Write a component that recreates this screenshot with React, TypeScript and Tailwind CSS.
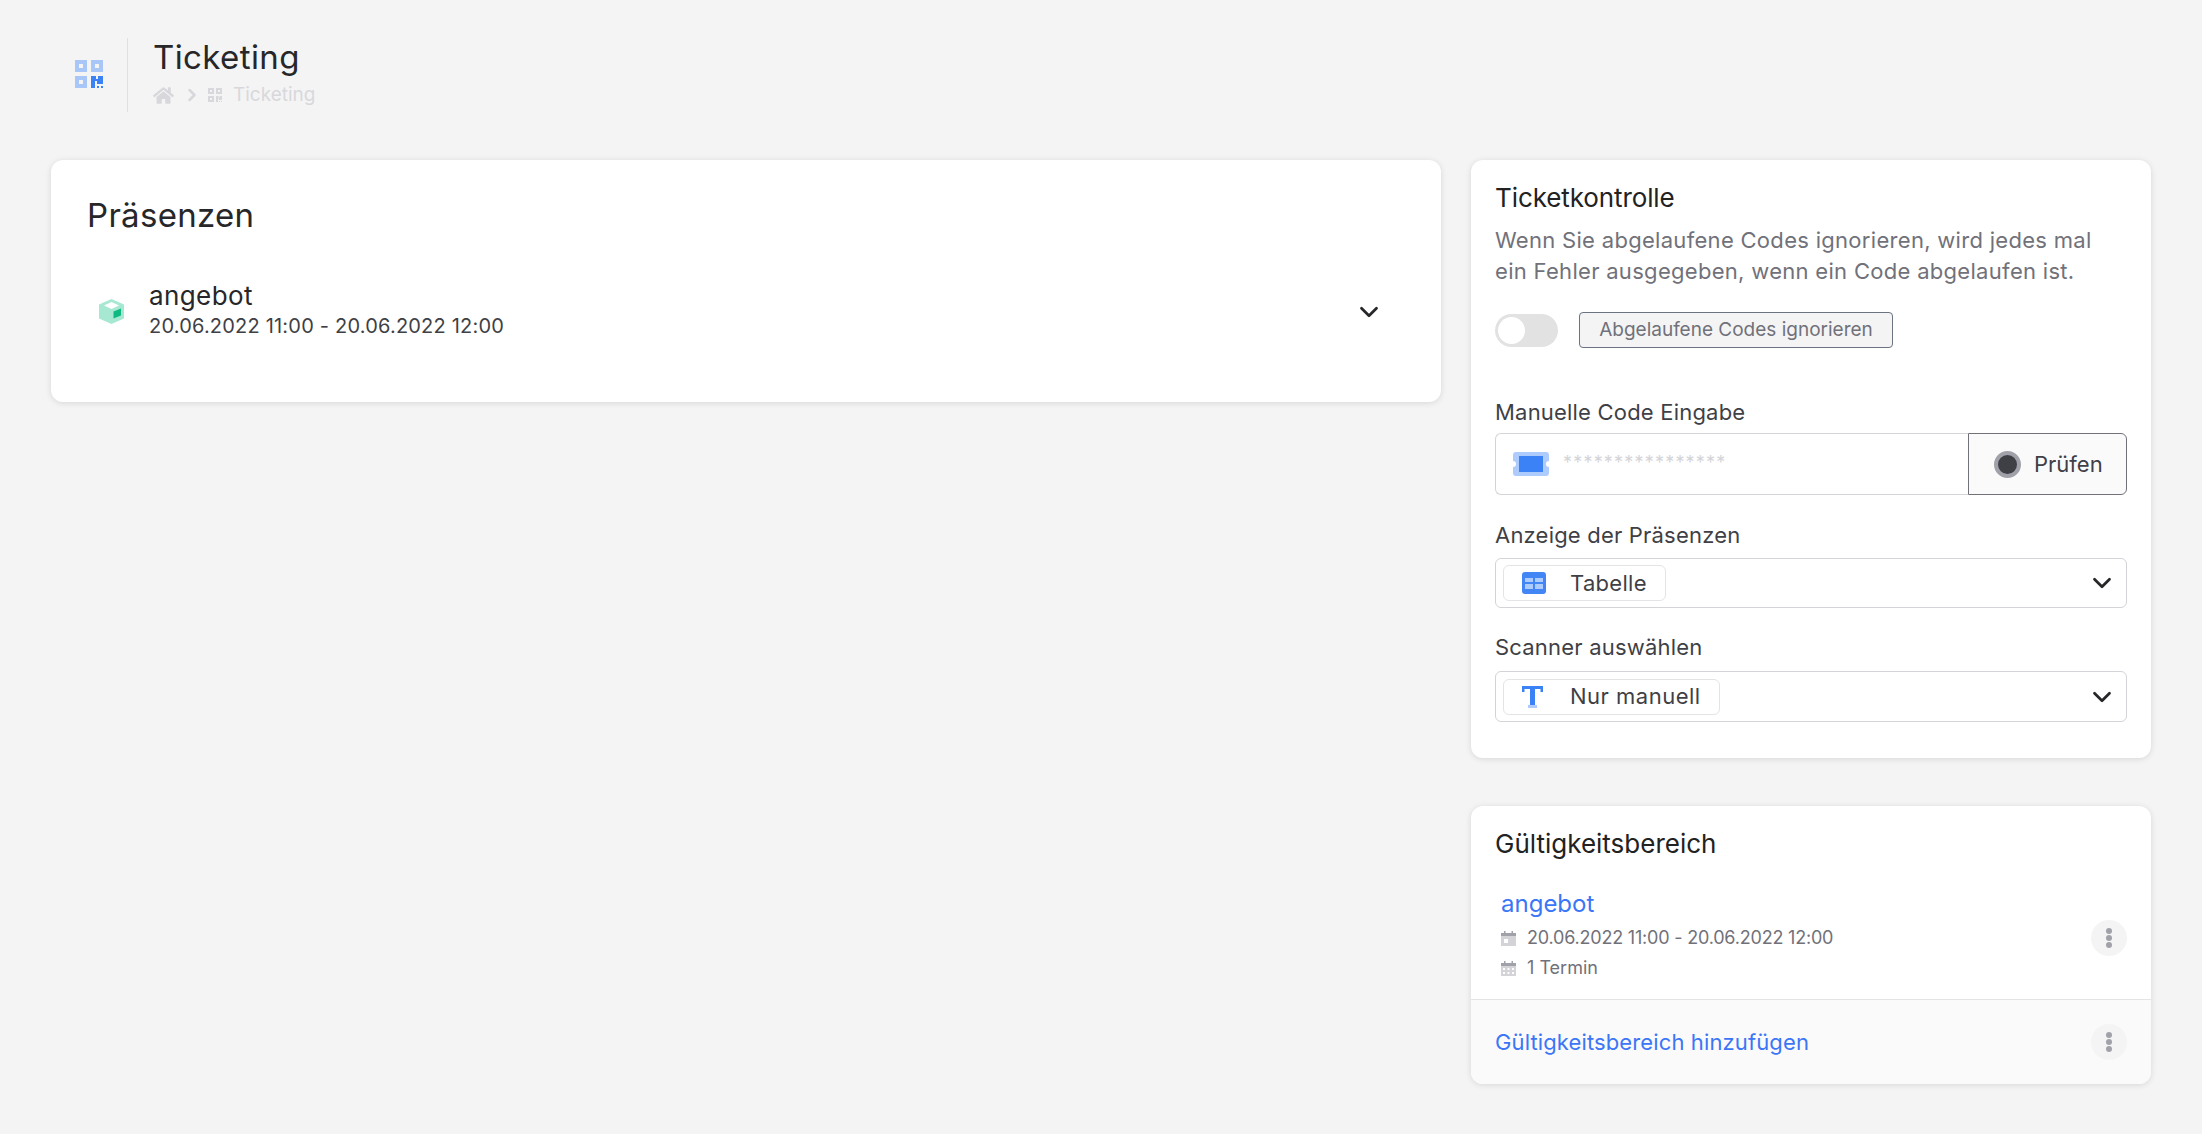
import { ChevronDown, ChevronRight } from "lucide-react";
import { FaHome } from "react-icons/fa";

function QrIcon({ light, dark, size }: { light: string; dark: string; size: number })
{
    return (
        <svg width={size} height={size} viewBox="0 0 28 28" className="shrink-0">
            <path fill={light} fillRule="evenodd" d="M0 0h12v12H0zM4 4v4h4V4z" />
            <path fill={light} fillRule="evenodd" d="M16 0h12v12H16zM20 4v4h4V4z" />
            <path fill={light} fillRule="evenodd" d="M0 16h12v12H0zM4 20v4h4v-4z" />
            <path fill={dark} d="M16 16h5v3h2v-3h5v8h-6v-3h-2v7h-4z" />
            <path fill={dark} d="M22 26h2v2h-2zM26 26h2v2h-2z" />
        </svg>
    );
}

function BoxIcon()
{
    return (
        <svg width="25" height="25" viewBox="0 0 25 25" className="shrink-0">
            <path fill="#a7e8d2" d="M12.5 0L25 5.5v14L12.5 25 0 19.500v-14z" />
            <path fill="#ffffff" d="M12.500 3L20 6.500 12.500 10 5 6.500z" />
            <path fill="#10b981" d="M14.500 12.500L22 9.500v7l-7.500 3z" />
        </svg>
    );
}

function TicketIcon()
{
    return (
        <svg width="36" height="24" viewBox="0 0 36 24" className="shrink-0">
            <path fill="#aecbfd" d="M3 0h30a3 3 0 0 1 3 3v6a3 3 0 0 0 0 6v6a3 3 0 0 1-3 3H3a3 3 0 0 1-3-3v-6a3 3 0 0 0 0-6V3a3 3 0 0 1 3-3z" />
            <rect x="6" y="4" width="24" height="16" fill="#3b82f6" />
        </svg>
    );
}

function TableIcon()
{
    return (
        <svg width="24" height="22" viewBox="0 0 24 22" className="shrink-0">
            <rect width="24" height="22" rx="3" fill="#4285f4" />
            <path fill="#aecbfd" d="M3 6h8v4H3zM13 6h8v4h-8zM3 12h8v5H3zM13 12h8v5h-8z" />
        </svg>
    );
}

function TextIcon()
{
    return (
        <svg width="21" height="22" viewBox="0 0 21 22" className="shrink-0">
            <path fill="#3b82f6" d="M0 0h21v6h-2.500V3H13v16H8V3H2.500v3H0z" />
            <rect x="6" y="19" width="9" height="3" fill="#aecbfd" />
        </svg>
    );
}

function CalendarDay()
{
    return (
        <svg width="15" height="15" viewBox="0 0 15 15" className="shrink-0">
            <path fill="#a1a1aa" d="M0 2h3V0h1.500v2h6V0H12v2h3v3H0z" />
            <path fill="#d4d4d8" d="M0 5h15v10H0z" />
            <rect x="3" y="8" width="4" height="4" fill="#ffffff" />
        </svg>
    );
}

function CalendarMonth()
{
    return (
        <svg width="15" height="15" viewBox="0 0 15 15" className="shrink-0">
            <path fill="#a1a1aa" d="M0 2h3V0h1.500v2h6V0H12v2h3v3H0z" />
            <path fill="#d4d4d8" d="M0 5h15v10H0z" />
            <path fill="#ffffff" d="M2 7h2v2H2zM6.500 7h2v2h-2zM11 7h2v2h-2zM2 11h2v2H2zM6.500 11h2v2h-2zM11 11h2v2h-2z" />
        </svg>
    );
}

function Kebab()
{
    return (
        <button className="w-9 h-9 rounded-full bg-[#f4f4f4] flex flex-col items-center justify-center gap-[1px] shrink-0">
            <span className="w-[6px] h-[6px] rounded-full bg-[#a1a1aa]" />
            <span className="w-[6px] h-[6px] rounded-full bg-[#a1a1aa]" />
            <span className="w-[6px] h-[6px] rounded-full bg-[#a1a1aa]" />
        </button>
    );
}

export default function App()
{
    return (
        <div className="min-h-screen bg-[#f4f4f4] font-['Inter',sans-serif] text-[#27272a] pb-[49px]">
            <header className="flex items-center pt-[38px] pl-[75px]">
                <div className="mb-[2px]"><QrIcon light="#a9c6f9" dark="#3b82f6" size={28} /></div>
                <div className="w-px h-[74px] bg-[#e0e0e0] ml-[24px]" />
                <div className="ml-[25px]">
                    <h1 className="text-[33px] leading-[38px] pb-[2px] tracking-[0.4px] font-normal text-[#27272a]">Ticketing</h1>
                    <div className="flex items-center h-[34px] text-[#d8d8dc]">
                        <FaHome size={21} />
                        <ChevronRight size={20} strokeWidth={3} className="ml-[8px]" />
                        <span className="ml-[6px]"><QrIcon light="#d8d8dc" dark="#d8d8dc" size={14} /></span>
                        <span className="ml-[11px] text-[19px]">Ticketing</span>
                    </div>
                </div>
            </header>

            <main className="flex gap-[30px] items-start pl-[51px] pr-[51px] mt-[48px]">
                <section className="w-[1390px] bg-white rounded-xl shadow-[0_1px_6px_rgba(0,0,0,0.12)] pt-[35px] pb-[61px] pl-[36px] pr-[57px]">
                    <h2 className="text-[33px] leading-[40px] tracking-[0.3px] font-normal">Präsenzen</h2>
                    <div className="flex items-center mt-[46px] pl-[12px]">
                        <BoxIcon />
                        <div className="ml-[25px] grow">
                            <div className="text-[26px] leading-[30px] tracking-[0.4px]">angebot</div>
                            <div className="text-[20px] leading-[30px] tracking-[0.2px] text-[#3f3f46]">20.06.2022 11:00 - 20.06.2022 12:00</div>
                        </div>
                        <ChevronDown size={30} strokeWidth={2.2} className="mt-[2px]" />
                    </div>
                </section>

                <aside className="w-[680px] flex flex-col gap-[48px]">
                    <section className="bg-white rounded-xl shadow-[0_1px_6px_rgba(0,0,0,0.12)] pt-[23px] pb-[36px] px-[24px]">
                        <h3 className="text-[26px] leading-[30px] -tracking-[0.1px] text-[#222]">Ticketkontrolle</h3>
                        <p className="mt-[12px] text-[22px] leading-[31px] tracking-[0.3px] text-[#71717a]">
                            Wenn Sie abgelaufene Codes ignorieren, wird jedes mal<br />
                            ein Fehler ausgegeben, wenn ein Code abgelaufen ist.
                        </p>
                        <div className="flex items-center mt-[25px] gap-[21px]">
                            <div className="w-[63px] h-[33px] rounded-full bg-[#e2e2e2] flex items-center pl-[3px]">
                                <div className="w-[27px] h-[27px] rounded-full bg-white" />
                            </div>
                            <button className="w-[314px] h-[36px] rounded border border-[#6b7280] bg-[#f4f4f4] text-[19px] text-[#71717a]">
                                Abgelaufene Codes ignorieren
                            </button>
                        </div>

                        <label className="block mt-[51px] text-[22px] leading-[26px] tracking-[0.2px] text-[#3f3f46]">Manuelle Code Eingabe</label>
                        <div className="flex mt-[8px] h-[62px]">
                            <div className="flex items-center grow border border-r-0 border-[#d4d4d8] rounded-l-md pl-[17px]">
                                <TicketIcon />
                                <span className="ml-[14px] -mt-[3px] text-[18px] tracking-[1.2px] text-[#d4d4d8]">****************</span>
                            </div>
                            <button className="w-[159px] flex items-center border border-[#71717a] rounded-r-md bg-[#fafafa] pl-[25px]">
                                <span className="w-[27px] h-[27px] rounded-full bg-[#3f3f46] border-[4px] border-[#a1a1aa]" />
                                <span className="ml-[13px] text-[22px] text-[#3f3f46]">Prüfen</span>
                            </button>
                        </div>

                        <label className="block mt-[27px] text-[22px] leading-[26px] tracking-[0.2px] text-[#3f3f46]">Anzeige der Präsenzen</label>
                        <div className="flex items-center justify-between mt-[10px] h-[50px] border border-[#d4d4d8] rounded-md pl-[7px] pr-[9px]">
                            <div className="flex items-center h-[36px] w-[163px] border border-[#e4e4e7] rounded-md pl-[18px]">
                                <TableIcon />
                                <span className="ml-[24px] text-[22px] tracking-[0.3px] text-[#3f3f46]">Tabelle</span>
                            </div>
                            <ChevronDown size={30} strokeWidth={2.2} />
                        </div>

                        <label className="block mt-[26px] text-[22px] leading-[26px] tracking-[0.2px] text-[#3f3f46]">Scanner auswählen</label>
                        <div className="flex items-center justify-between mt-[11px] h-[51px] border border-[#d4d4d8] rounded-md pl-[7px] pr-[9px]">
                            <div className="flex items-center h-[36px] w-[217px] border border-[#e4e4e7] rounded-md pl-[18px]">
                                <TextIcon />
                                <span className="ml-[27px] text-[22px] tracking-[0.5px] text-[#3f3f46]">Nur manuell</span>
                            </div>
                            <ChevronDown size={30} strokeWidth={2.2} />
                        </div>
                    </section>

                    <section className="bg-white rounded-xl shadow-[0_1px_6px_rgba(0,0,0,0.12)] overflow-hidden">
                        <div className="pt-[23px] pb-[19px] px-[24px] border-b border-[#e4e4e7]">
                            <h3 className="text-[26px] leading-[30px] text-[#222]">Gültigkeitsbereich</h3>
                            <div className="flex items-center justify-between mt-[32px]">
                                <div className="pl-[6px]">
                                    <a className="block text-[24px] leading-[26px] text-[#3b76f6]">angebot</a>
                                    <div className="flex items-center gap-[11px] mt-[9px] text-[18px] leading-[24px] -tracking-[0.2px] text-[#71717a]">
                                        <CalendarDay />
                                        <span>20.06.2022 11:00 - 20.06.2022 12:00</span>
                                    </div>
                                    <div className="flex items-center gap-[11px] mt-[6px] text-[18px] leading-[24px] text-[#71717a]">
                                        <CalendarMonth />
                                        <span>1 Termin</span>
                                    </div>
                                </div>
                                <div className="mt-[5px]"><Kebab /></div>
                            </div>
                        </div>
                        <div className="flex items-center justify-between h-[84px] px-[24px] bg-[#fafafa]">
                            <a className="text-[22px] tracking-[0.12px] text-[#3b76f6]">Gültigkeitsbereich hinzufügen</a>
                            <Kebab />
                        </div>
                    </section>
                </aside>
            </main>
        </div>
    );
}
